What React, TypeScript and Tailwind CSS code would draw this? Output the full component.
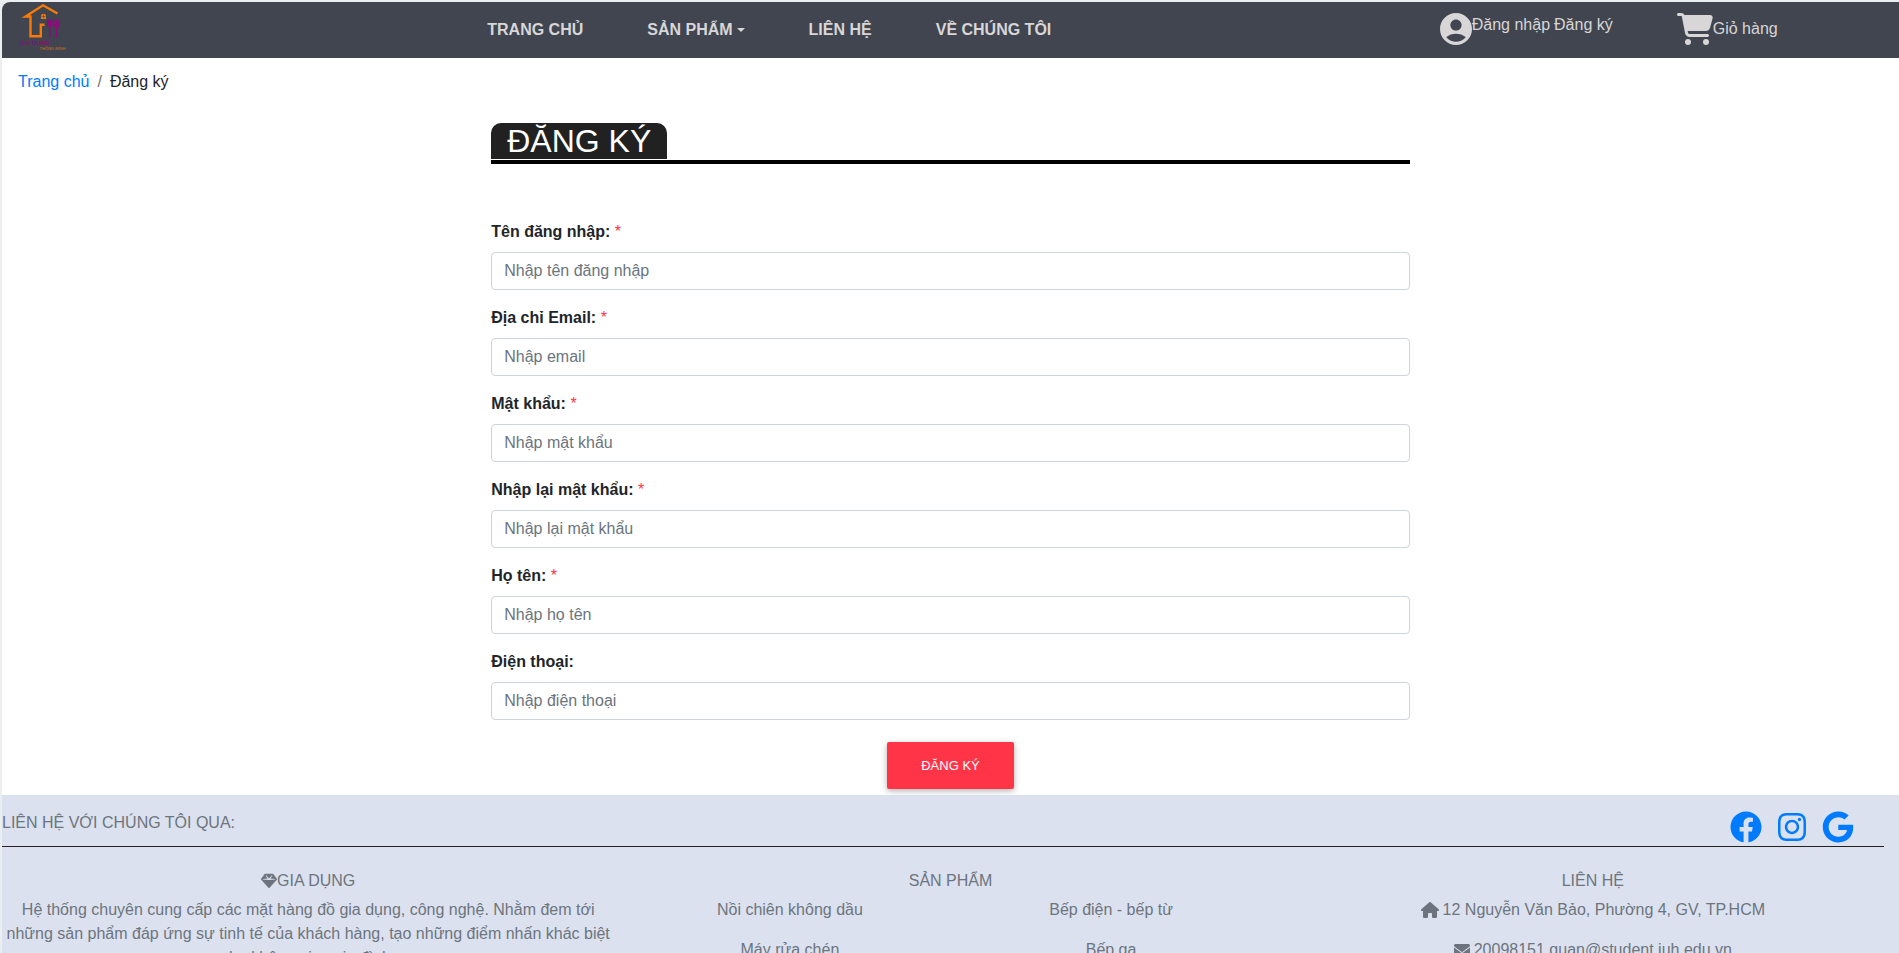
import { FaFacebook, FaInstagram, FaGoogle } from "react-icons/fa";
import { FaHouse, FaEnvelope, FaCartShopping, FaGem } from "react-icons/fa6";
import { MdAccountCircle } from "react-icons/md";

const fields = [
  { id: "username", label: "Tên đăng nhập:", placeholder: "Nhập tên đăng nhập", type: "text", required: true },
  { id: "email", label: "Địa chỉ Email:", placeholder: "Nhập email", type: "email", required: true },
  { id: "password", label: "Mật khẩu:", placeholder: "Nhập mật khẩu", type: "password", required: true },
  { id: "confirm", label: "Nhập lại mật khẩu:", placeholder: "Nhập lại mật khẩu", type: "password", required: true },
  { id: "fullname", label: "Họ tên:", placeholder: "Nhập họ tên", type: "text", required: true },
  { id: "phone", label: "Điện thoại:", placeholder: "Nhập điện thoại", type: "tel", required: false },
];

const products = ["Nồi chiên không dầu", "Bếp điện - bếp từ", "Máy rửa chén", "Bếp ga"];

function Logo() {
  return (
    <svg viewBox="0 0 50 50" className="h-[50px] w-[50px]" role="img" aria-label="Gia Dụng Thông Minh">
      <g fill="none" stroke="#f97b06" strokeWidth="2.400">
        <path d="M13 14.500H7.500L25 3.300 39.500 11.500" />
        <path d="M12.500 13.500V34.300H22.800V22.800H26.500" />
      </g>
      <path d="M23 14q0-2.200 2.500-2.200T28 14v3h-5z" fill="#f97b06" />
      <path d="M25.500 12.500v4M23.500 14.500h4" stroke="#404550" strokeWidth="0.600" />
      <g fill="#8e0a7d">
        <ellipse cx="31.800" cy="21.300" rx="2.800" ry="4" />
        <path d="M31 24h1.600v11.800H31zM37.700 24h1.600v11.800h-1.600z" />
        <path d="M35.500 17.500h1.200v5h1.200v-5h1.200v5h1.200v-5h1.200V24l-1.700 2h-2.600l-1.700-2z" />
      </g>
      <text x="2" y="43" fontSize="6" fontWeight="700" fill="#8e0a7d">GIA DỤNG</text>
      <text x="21.500" y="48.300" fontSize="4" fontStyle="italic" fill="#d97012">THÔNG MINH</text>
    </svg>
  );
}

function Header() {
  return (
    <header className="grid h-14 grid-cols-4 rounded-tl-lg bg-[#404550] text-[#d8d6d7]">
      <a href="#home" className="pl-4">
        <Logo />
      </a>
      <nav className="col-span-2 flex items-center gap-16 pl-[11px] font-bold">
        <a href="#home">TRANG CHỦ</a>
        <a href="#products" className="flex items-center gap-1">
          SẢN PHẨM
          <span className="border-x-4 border-t-4 border-x-transparent border-t-current" />
        </a>
        <a href="#contact">LIÊN HỆ</a>
        <a href="#about">VỀ CHÚNG TÔI</a>
      </nav>
      <div className="flex items-center gap-16 pb-0.5 pl-[15px]">
        <div className="flex items-start whitespace-nowrap">
          <MdAccountCircle viewBox="2 2 20 20" className="size-8" />
          <span className="flex gap-1">
            <a href="#login">Đăng nhập</a>
            <a href="#register">Đăng ký</a>
          </span>
        </div>
        <a href="#cart" className="flex items-center whitespace-nowrap">
          <FaCartShopping className="h-8 w-9" />
          Giỏ hàng
        </a>
      </div>
    </header>
  );
}

function RegisterForm() {
  return (
    <main className="mx-auto w-1/2 px-[15px] pb-1.5">
      <div className="mb-14 border-b-4 border-black pb-px">
        <h1 className="w-fit rounded-t-[10px] bg-[#212121] px-4 text-[32px] leading-9 text-white">ĐĂNG KÝ</h1>
      </div>
      <form>
        {fields.map((f) => (
          <div key={f.id} className="mb-4">
            <label htmlFor={f.id} className="mb-2 block font-bold">
              {f.label} {f.required && <span className="font-normal text-[#ff3547]">*</span>}
            </label>
            <input
              id={f.id}
              type={f.type}
              placeholder={f.placeholder}
              className="block h-[38px] w-full rounded border border-[#ced4da] bg-white px-3 placeholder:text-[#6c757d]"
            />
          </div>
        ))}
        <button
          type="submit"
          className="mx-auto mt-[22px] block h-[47px] rounded-xs bg-[#ff3547] px-[34px] text-[13px] text-white shadow-[0_2px_5px_rgba(0,0,0,0.2),0_2px_10px_rgba(0,0,0,0.12)]"
        >
          ĐĂNG KÝ
        </button>
      </form>
    </main>
  );
}

function Footer() {
  return (
    <footer className="overflow-hidden bg-[#dce1ef] text-[#6c757d]">
      <div className="mr-[15px] flex h-[52px] items-start justify-between border-b border-[#212121]">
        <h2 className="pt-[18px] leading-5">LIÊN HỆ VỚI CHÚNG TÔI QUA:</h2>
        <div className="flex gap-4 pt-4 pr-[30px] text-[#007bff]">
          <a href="#facebook" aria-label="Facebook"><FaFacebook className="size-8" /></a>
          <a href="#instagram" aria-label="Instagram"><FaInstagram className="h-8 w-7" /></a>
          <a href="#google" aria-label="Google"><FaGoogle className="size-8" /></a>
        </div>
      </div>
      <div className="-mx-[15px] grid grid-cols-3 pt-6 text-center">
        <section className="px-[15px]">
          <h3 className="mb-2 flex items-center justify-center leading-[19px]"><FaGem />GIA DỤNG</h3>
          <p className="mb-4">
            Hệ thống chuyên cung cấp các mặt hàng đồ gia dụng, công nghệ. Nhằm đem tới những sản phẩm đáp ứng sự tinh tế của khách hàng, tạo những điểm nhấn khác biệt cho không gian gia đình.
          </p>
        </section>
        <section>
          <h3 className="mb-2 leading-[19px]">SẢN PHẨM</h3>
          <ul className="grid grid-cols-2 gap-y-4">
            {products.map((p) => (
              <li key={p}><a href="#products">{p}</a></li>
            ))}
          </ul>
        </section>
        <section className="px-[15px]">
          <h3 className="mb-2 leading-[19px]">LIÊN HỆ</h3>
          <p className="mb-4 flex items-center justify-center gap-1">
            <FaHouse className="h-4 w-[18px]" />12 Nguyễn Văn Bảo, Phường 4, GV, TP.HCM
          </p>
          <p className="mb-4 flex items-center justify-center gap-1">
            <FaEnvelope />20098151.quan@student.iuh.edu.vn
          </p>
        </section>
      </div>
    </footer>
  );
}

export default function App() {
  return (
    <div className="bg-[#eceff1] pt-0.5 pl-0.5 font-['Liberation_Sans',Arial,sans-serif] text-base text-[#212529]">
      <div className="rounded-tl-lg bg-white">
        <Header />
        <nav aria-label="breadcrumb" className="mb-[17px] flex gap-2 px-4 py-3">
          <a href="#home" className="text-[#007bff]">Trang chủ</a>
          <span className="text-[#6c757d]">/</span>
          <span>Đăng ký</span>
        </nav>
        <RegisterForm />
        <Footer />
      </div>
    </div>
  );
}
